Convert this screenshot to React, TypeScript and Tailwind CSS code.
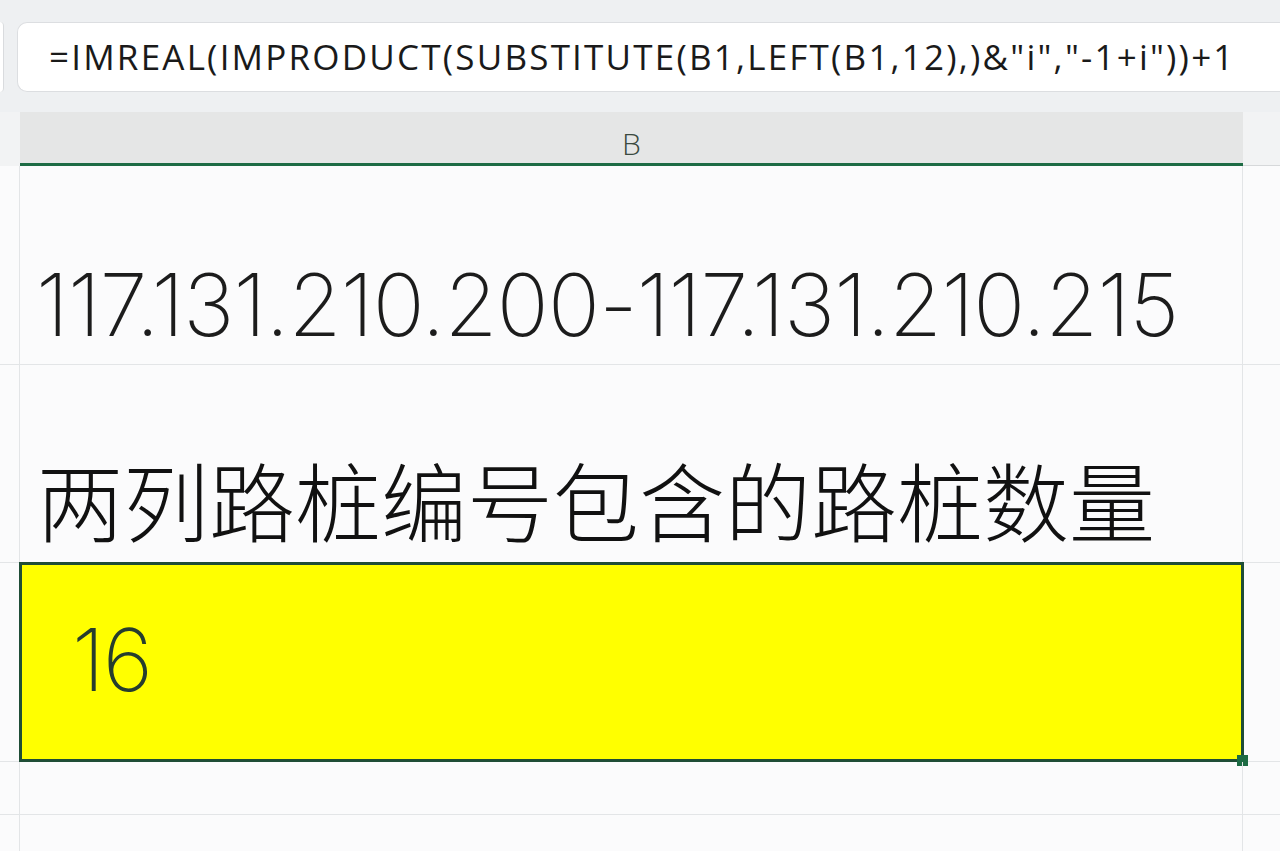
const formula = '=IMREAL(IMPRODUCT(SUBSTITUTE(B1,LEFT(B1,12),)&"i","-1+i"))+1'

function Row({
  height,
  children,
  last,
}: {
  height: string
  children?: React.ReactNode
  last?: boolean
}) {
  return (
    <div className={`flex ${height} ${last ? '' : 'border-b border-[#e3e5e7]'}`}>
      <div className="w-[20px] shrink-0 border-r border-[#e3e5e7]" />
      <div className="relative w-[1223px] shrink-0 border-r border-[#e3e5e7]">{children}</div>
      <div className="flex-1" />
    </div>
  )
}

export default function App() {
  return (
    <div className="h-[851px] w-[1280px] overflow-hidden bg-[#f9fafb] font-['Inter','Noto_Sans_CJK_SC',sans-serif]">
      {/* formula bar */}
      <div className="flex h-[112px] items-start bg-[#eef0f2] pt-[22px]">
        <div className="h-[70px] w-[4px] shrink-0 rounded-r border-r border-[#d9dbde] bg-white" />
        <div className="ml-[13px] flex h-[70px] flex-1 items-center rounded-l-[10px] border border-r-0 border-[#dcdee1] bg-white pl-[31px]">
          <span className="font-['Open_Sans',sans-serif] text-[35px] tracking-[2.2px] text-[#1a1a1a]">
            {formula}
          </span>
        </div>
      </div>

      {/* column header */}
      <div className="flex h-[54px] bg-[#f2f3f4]">
        <div className="w-[20px] shrink-0" />
        <div className="flex w-[1223px] shrink-0 items-end justify-center border-b-[3px] border-[#1d6b44] bg-[#e5e6e6] pb-[4px]">
          <span className="font-['Open_Sans',sans-serif] text-[30px] font-light leading-none text-[#3a4a40]">B</span>
        </div>
        <div className="flex-1 border-b border-[#d6d8da]" />
      </div>

      {/* cells */}
      <div className="bg-[#fbfbfc]">
        <Row height="h-[199px]">
          <div className="flex h-full items-end pb-[16px] pl-[16px] text-[86px] font-extralight leading-none tracking-[-0.8px] text-[#1c1c1c]">
            117.131.210.200-117.131.210.215
          </div>
        </Row>
        <Row height="h-[198px]">
          <div className="flex h-full items-end pb-[20px] pl-[17px] font-['Noto_Sans_CJK_SC',sans-serif] text-[86px] font-light leading-none text-[#111]">
            两列路桩编号包含的路桩数量
          </div>
        </Row>
        <Row height="h-[199px]">
          <div className="absolute -left-[1px] -top-[1px] h-[200px] w-[1225px] border-[3px] border-[#1f4d36] bg-[#ffff00]">
            <div className="flex h-full items-center pb-[4px] pl-[50px] text-[86px] font-extralight leading-none tracking-[-2px] text-[#263d2e]">
              16
            </div>
            <div className="absolute -bottom-[7px] -right-[7px] h-[11px] w-[11px] bg-[#1d6b44]" />
          </div>
        </Row>
        <Row height="h-[53px]" />
        <Row height="h-[60px]" last />
      </div>
    </div>
  )
}
